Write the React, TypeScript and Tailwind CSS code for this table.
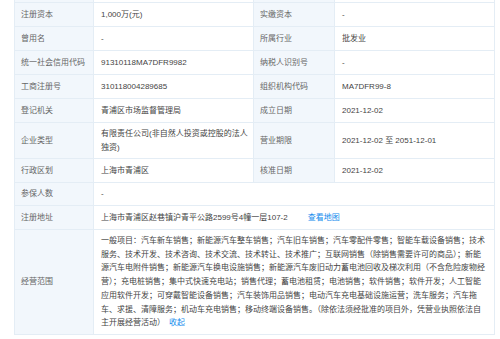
const font = { fontFamily: '"Liberation Sans", "Noto Sans CJK SC", sans-serif' };

const label = 'flex items-center pl-[6px] bg-[#f2f7fc] border-r border-b border-[#e4edf5] text-[#666]';
const value = 'flex items-center pl-[7px] bg-white border-r border-b border-[#e4edf5] text-[#444]';

const scope = [
  '一般项目：汽车新车销售；新能源汽车整车销售；汽车旧车销售；汽车零配件零售；智能车载设备销售；技术',
  '服务、技术开发、技术咨询、技术交流、技术转让、技术推广；互联网销售（除销售需要许可的商品）；新能',
  '源汽车电附件销售；新能源汽车换电设施销售；新能源汽车废旧动力蓄电池回收及梯次利用（不含危险废物经',
  '营）；充电桩销售；集中式快速充电站；销售代理；蓄电池租赁；电池销售；软件销售；软件开发；人工智能',
  '应用软件开发；可穿戴智能设备销售；汽车装饰用品销售；电动汽车充电基础设施运营；洗车服务；汽车拖',
  '车、求援、清障服务；机动车充电销售；移动终端设备销售。（除依法须经批准的项目外，凭营业执照依法自',
];

const pairs: [string, string, string, string][] = [
  ['注册资本', '1,000万(元)', '实缴资本', '-'],
  ['曾用名', '-', '所属行业', '批发业'],
  ['统一社会信用代码', '91310118MA7DFR9982', '纳税人识别号', '-'],
  ['工商注册号', '310118004289685', '组织机构代码', 'MA7DFR99-8'],
  ['登记机关', '青浦区市场监督管理局', '成立日期', '2021-12-02'],
];

export default function App() {
  return (
    <div className="w-[500px] h-[339px] bg-white overflow-hidden pl-[14px] text-[8px] leading-[13.7px]" style={font}>
      <div className="w-[480px] grid grid-cols-[79px_160px_81px_160px] border-l border-[#e4edf5]">
        <div className="h-[3px] bg-[#f2f7fc] border-r border-b border-[#e4edf5]" />
        <div className="h-[3px] bg-white border-r border-b border-[#e4edf5]" />
        <div className="h-[3px] bg-[#f2f7fc] border-r border-b border-[#e4edf5]" />
        <div className="h-[3px] bg-white border-r border-b border-[#e4edf5]" />

        {pairs.map(([a, b, c, d]) => (
          <div key={a} className="contents">
            <div className={`${label} h-[24px]`}>{a}</div>
            <div className={`${value} h-[24px]`}>{b}</div>
            <div className={`${label} h-[24px]`}>{c}</div>
            <div className={`${value} h-[24px]`}>{d}</div>
          </div>
        ))}

        <div className={`${label} h-[36px]`}>企业类型</div>
        <div className={`${value} h-[36px]`}>
          <div>
            有限责任公司(非自然人投资或控股的法人
            <br />
            独资)
          </div>
        </div>
        <div className={`${label} h-[36px]`}>营业期限</div>
        <div className={`${value} h-[36px]`}>2021-12-02 至 2051-12-01</div>

        <div className={`${label} h-[24px]`}>行政区划</div>
        <div className={`${value} h-[24px]`}>上海市青浦区</div>
        <div className={`${label} h-[24px]`}>核准日期</div>
        <div className={`${value} h-[24px]`}>2021-12-02</div>

        <div className={`${label} h-[23px]`}>参保人数</div>
        <div className={`${value} h-[23px] col-span-3`}>-</div>

        <div className={`${label} h-[24px]`}>注册地址</div>
        <div className={`${value} h-[24px] col-span-3`}>
          上海市青浦区赵巷镇沪青平公路2599号4幢一层107-2
          <span className="ml-[20px] text-[#128bed]">查看地图</span>
        </div>

        <div className={`${label} h-[105px]`}>经营范围</div>
        <div className={`${value} h-[105px] col-span-3`}>
          <div className="whitespace-nowrap">
            {scope.map((line) => (
              <div key={line}>{line}</div>
            ))}
            <div>
              主开展经营活动）<span className="ml-[4px] text-[#128bed]">收起</span>
            </div>
          </div>
        </div>
      </div>
    </div>
  );
}
